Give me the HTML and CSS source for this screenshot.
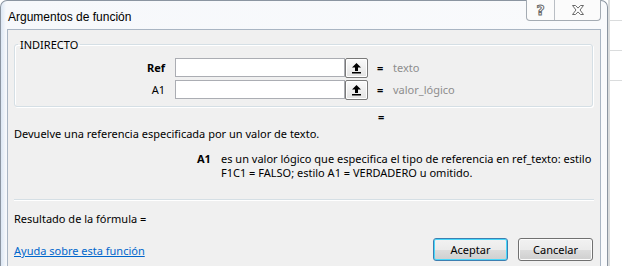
FILE: index.html
```html
<!DOCTYPE html>
<html lang="es">
<head>
    <meta charset="UTF-8">
    <title>Argumentos de función</title>
    <link rel="stylesheet" href="styles.css">
</head>
<body>

<div class="page">
    <div class="window">
        <div class="titlebar">
            <span class="title">Argumentos de función</span>
            <div class="caption-buttons">
                <div class="cap-btn help">?</div>
                <div class="cap-btn close">
                    <svg width="14" height="12" viewBox="0 0 14 12">
                        <path d="M1.5 1.5h3l2.5 2.6 2.5-2.6h3L9 6l3.5 4.5h-3L7 7.9 4.5 10.5h-3L5 6z" fill="#fff" stroke="#6a6a6a" stroke-width="1" stroke-linejoin="round"/>
                    </svg>
                </div>
            </div>
        </div>

        <div class="content">
            <fieldset class="group">
                <legend>INDIRECTO</legend>
                <div class="arg-row">
                    <label class="arg-name bold" for="ref">Ref</label>
                    <input class="arg-input" type="text" id="ref">
                    <button class="collapse-btn">
                        <svg width="11" height="12" viewBox="0 0 11 12">
                            <path d="M5.5 1L1 5.5h3V9h3V5.5h3z" fill="#000"/>
                            <rect x="1" y="10" width="9" height="1.5" fill="#000"/>
                        </svg>
                    </button>
                    <span class="eq">=</span>
                    <span class="arg-value">texto</span>
                </div>
                <div class="arg-row">
                    <label class="arg-name" for="a1">A1</label>
                    <input class="arg-input" type="text" id="a1">
                    <button class="collapse-btn">
                        <svg width="11" height="12" viewBox="0 0 11 12">
                            <path d="M5.5 1L1 5.5h3V9h3V5.5h3z" fill="#000"/>
                            <rect x="1" y="10" width="9" height="1.5" fill="#000"/>
                        </svg>
                    </button>
                    <span class="eq">=</span>
                    <span class="arg-value">valor_lógico</span>
                </div>
            </fieldset>

            <div class="result-eq">=</div>

            <p class="description">Devuelve una referencia especificada por un valor de texto.</p>

            <div class="arg-help">
                <span class="arg-help-name">A1</span>
                <span class="arg-help-text">es un valor lógico que especifica el tipo de referencia en ref_texto: estilo F1C1 = FALSO; estilo A1 = VERDADERO u omitido.</span>
            </div>

            <div class="separator"></div>

            <div class="formula-result">Resultado de la fórmula =</div>

            <div class="footer">
                <a class="help-link" href="#">Ayuda sobre esta función</a>
                <div class="actions">
                    <button class="btn default">Aceptar</button>
                    <button class="btn">Cancelar</button>
                </div>
            </div>
        </div>
    </div>
    <div class="sheet">
        <div class="sheet-cell"></div>
        <div class="sheet-cell"></div>
        <div class="sheet-cell"></div>
    </div>
</div>

</body>
</html>
```

FILE: styles.css
```css
body {
    margin: 0;
    background-color: #ffffff;
    font-family: 'Noto Sans', 'Liberation Sans', sans-serif;
    font-size: 11px;
    line-height: 13px;
    color: #000;
    overflow: hidden;
}
.page {
    display: flex;
    height: 266px;
}
.window {
    width: 594px;
    height: 290px;
    flex-shrink: 0;
    padding: 0 6px 0 6px;
    background: linear-gradient(to right, #dce7f4 0, #f6f8fb 5px, #f9fafc 100%);
    border: 1px solid #8b95a1;
    border-bottom: none;
    border-radius: 7px 7px 0 0;
}
.titlebar {
    height: 28px;
    display: flex;
    justify-content: space-between;
    align-items: flex-start;
}
.title {
    font-family: 'Liberation Sans', Arial, sans-serif;
    font-size: 12px;
    line-height: 14px;
    margin-top: 9px;
    margin-left: 1px;
}
.caption-buttons {
    display: flex;
    margin-top: -1px;
    border: 1px solid #a4abb3;
    border-top: none;
    border-radius: 0 0 4px 4px;
    background-color: #fbfbfb;
}
.cap-btn {
    height: 20px;
    display: flex;
    align-items: center;
    justify-content: center;
}
.help {
    width: 27px;
    border-right: 1px solid #b9bec4;
    font-family: 'DejaVu Sans', sans-serif;
    font-size: 14px;
    font-weight: bold;
    color: #fff;
    -webkit-text-stroke: 1px #6a6a6a;
}
.close {
    width: 45px;
}
.content {
    height: 260px;
    background-color: #f0f0f0;
    border: 1px solid #a9b5c3;
    border-bottom: none;
}
.group {
    margin: 8px 7px 0 6px;
    padding: 5px 0 6px 0;
    border: 1px solid #d5dfe5;
    border-radius: 3px;
    box-shadow: inset 1px 1px 0 #fff, 1px 1px 0 #fff;
}
.group legend {
    padding: 0 2px;
    margin-left: 3px;
}
.arg-row {
    display: flex;
    align-items: center;
    height: 22px;
}
.arg-name {
    width: 150px;
    margin-right: 10px;
    text-align: right;
}
.bold {
    font-weight: bold;
}
.arg-input {
    width: 170px;
    height: 19px;
    box-sizing: border-box;
    margin: 1px 0 0 0;
    border: 1px solid #abadb3;
    border-radius: 0;
    background-color: #fff;
}
.collapse-btn {
    width: 23px;
    height: 20px;
    box-sizing: border-box;
    margin: 1px 0 0 0;
    padding: 0;
    display: flex;
    align-items: center;
    justify-content: center;
    border: 1px solid #7a7a7a;
    border-radius: 2px;
    background: linear-gradient(#fafafa, #e4e4e4);
    box-shadow: inset 0 0 0 1px #fff;
}
.eq {
    width: 14px;
    margin-left: 9px;
    font-weight: bold;
}
.arg-value {
    margin-left: 2px;
    color: #8d8d8d;
}
.result-eq {
    margin: 3px 0 0 370px;
    font-weight: bold;
}
.description {
    margin: 4px 0 0 6px;
}
.arg-help {
    display: flex;
    margin: 12px 0 0 189px;
    line-height: 14px;
}
.arg-help-name {
    width: 24px;
    flex-shrink: 0;
    font-weight: bold;
}
.arg-help-text {
    width: 380px;
}
.separator {
    height: 1px;
    margin: 19px 6px 0 6px;
    background-color: #d5dfe5;
    border-bottom: 1px solid #fff;
}
.formula-result {
    margin: 11px 0 0 6px;
}
.footer {
    display: flex;
    justify-content: space-between;
    align-items: center;
    margin: 13px 7px 0 6px;
}
.help-link {
    color: #0066cc;
    margin-top: 2px;
}
.actions {
    display: flex;
    gap: 10px;
}
.btn {
    width: 75px;
    height: 23px;
    font-family: 'Noto Sans', 'Liberation Sans', sans-serif;
    font-size: 11px;
    border: 1px solid #707070;
    border-radius: 3px;
    background: linear-gradient(#f2f2f2 0, #ebebeb 50%, #dddddd 51%, #cfcfcf 100%);
    box-shadow: inset 0 0 0 1px #fcfcfc;
}
.btn.default {
    border-color: #3c7fb1;
    box-shadow: inset 0 0 0 1px #48d8fb;
}
.sheet {
    flex: 1;
    border-left: 2px solid #dadcdd;
}
.sheet-cell {
    height: 20px;
    border-bottom: 1px solid #dadcdd;
}
.sheet-cell + .sheet-cell {
    height: 29px;
}
```
